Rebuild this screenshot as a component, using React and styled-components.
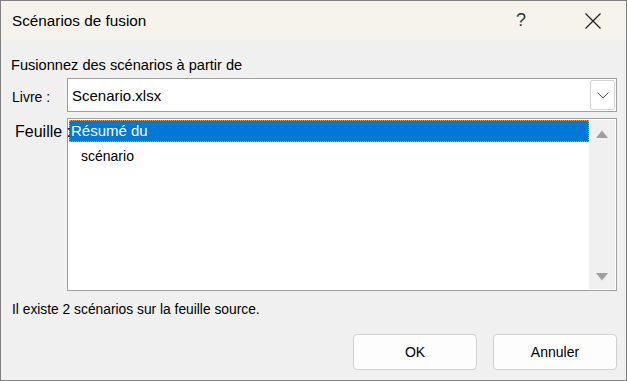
import React from 'react';
import styled, { createGlobalStyle } from 'styled-components';

const GlobalStyle = createGlobalStyle`
  html, body {
    margin: 0;
    padding: 0;
    background: #f0f0f0;
  }
  body {
    font-family: "Liberation Sans", Arial, sans-serif;
    color: #000;
  }
`;

const Window = styled.div`
  box-sizing: border-box;
  width: 627px;
  height: 381px;
  border: 1px solid #7f7f7f;
  background: #f0f0f0;
  display: flex;
  flex-direction: column;
`;

const TitleBar = styled.div`
  height: 39px;
  background: #f6f3ec;
  display: flex;
  align-items: center;
  padding-left: 11px;
`;

const TitleText = styled.div`
  flex: 1;
  font-size: 15.3px;
`;

const TitleButton = styled.div`
  width: ${(p) => p.w}px;
  margin-right: ${(p) => p.gap || 0}px;
  height: 39px;
  display: flex;
  align-items: center;
  justify-content: center;
  font-size: 18px;
  color: #333;
`;

const Body = styled.div`
  flex: 1;
  display: flex;
  flex-direction: column;
  padding: 17px 9px 0 10px;
`;

const Intro = styled.div`
  font-size: 14.6px;
  line-height: 16px;
  margin-bottom: 5px;
`;

const FieldRow = styled.div`
  display: grid;
  grid-template-columns: 56px 1fr;
  align-items: ${(p) => p.align || 'center'};
  margin-bottom: 6px;
`;

const Label = styled.label`
  position: relative;
  z-index: 1;
  font-size: ${(p) => p.size || 14}px;
  padding-left: ${(p) => p.indent || 1}px;
  padding-top: ${(p) => p.top || 0}px;
  white-space: nowrap;
  width: 0;
  overflow: visible;
`;

const Combo = styled.div`
  box-sizing: border-box;
  height: 34px;
  background: #fff;
  border: 1px solid #a0a0a0;
  display: flex;
  align-items: center;
  padding: 1px;
`;

const ComboValue = styled.div`
  flex: 1;
  font-size: 15px;
  padding-left: 3px;
`;

const ComboButton = styled.div`
  box-sizing: border-box;
  width: 25px;
  height: 30px;
  border: 1px solid #d6d6d6;
  border-radius: 2px;
  display: flex;
  align-items: center;
  justify-content: center;
`;

const ListBox = styled.div`
  box-sizing: border-box;
  height: 173px;
  background: #fff;
  border: 1px solid #a0a0a0;
  display: flex;
  padding: 1px;
`;

const Items = styled.div`
  flex: 1;
  display: flex;
  flex-direction: column;
`;

const Item = styled.div`
  box-sizing: border-box;
  height: 22px;
  font-size: ${(p) => (p.selected ? 15 : 14)}px;
  line-height: 20px;
  padding-left: ${(p) => (p.selected ? 1 : 11)}px;
  background: ${(p) => (p.selected ? '#0078d7' : 'transparent')};
  color: ${(p) => (p.selected ? '#fff' : '#000')};
  border: 1px dotted ${(p) => (p.selected ? '#d9a95b' : 'transparent')};
  margin-top: ${(p) => (p.selected ? 0 : 3)}px;
`;

const ScrollBar = styled.div`
  width: 26px;
  background: #f0f0f0;
  display: flex;
  flex-direction: column;
  justify-content: space-between;
  align-items: center;
  padding: 10px 0 8px;
`;

const Status = styled.div`
  font-size: 13.8px;
  margin-top: 5px;
  padding-left: 1px;
`;

const Footer = styled.div`
  display: flex;
  justify-content: flex-end;
  gap: 16px;
  margin-top: 17px;
`;

const Button = styled.button`
  box-sizing: border-box;
  width: 124px;
  height: 36px;
  background: #fdfdfd;
  border: 1px solid #d0d0d0;
  border-radius: 4px;
  font-family: "Liberation Sans", Arial, sans-serif;
  font-size: 14px;
  color: #000;
`;

const Arrow = ({ up }) => (
  <svg width="12" height="8" viewBox="0 0 12 8">
    <path d={up ? 'M0 8 L6 0.5 L12 8 Z' : 'M0 0 L6 7.5 L12 0 Z'} fill="#a0a0a0" />
  </svg>
);

export default function App() {
  return (
    <>
      <GlobalStyle />
      <Window>
        <TitleBar>
          <TitleText>Scénarios de fusion</TitleText>
          <TitleButton w={44} gap={17}>?</TitleButton>
          <TitleButton w={66}>
            <svg width="16" height="16" viewBox="0 0 16 16">
              <path d="M0.5 0.5 L15.5 15.5 M15.5 0.5 L0.5 15.5" stroke="#222" strokeWidth="1.3" />
            </svg>
          </TitleButton>
        </TitleBar>
        <Body>
          <Intro>Fusionnez des scénarios à partir de</Intro>
          <FieldRow>
            <Label size={14} top={3}>Livre :</Label>
            <Combo>
              <ComboValue>Scenario.xlsx</ComboValue>
              <ComboButton>
                <svg width="12" height="7" viewBox="0 0 12 7">
                  <path d="M0.5 0.5 L6 6 L11.5 0.5" stroke="#555" strokeWidth="1" fill="none" />
                </svg>
              </ComboButton>
            </Combo>
          </FieldRow>
          <FieldRow align="start">
            <Label size={16} indent={4} top={5}>Feuille :</Label>
            <ListBox>
              <Items>
                <Item selected>Résumé du</Item>
                <Item>scénario</Item>
              </Items>
              <ScrollBar>
                <Arrow up />
                <Arrow />
              </ScrollBar>
            </ListBox>
          </FieldRow>
          <Status>Il existe 2 scénarios sur la feuille source.</Status>
          <Footer>
            <Button>OK</Button>
            <Button>Annuler</Button>
          </Footer>
        </Body>
      </Window>
    </>
  );
}
